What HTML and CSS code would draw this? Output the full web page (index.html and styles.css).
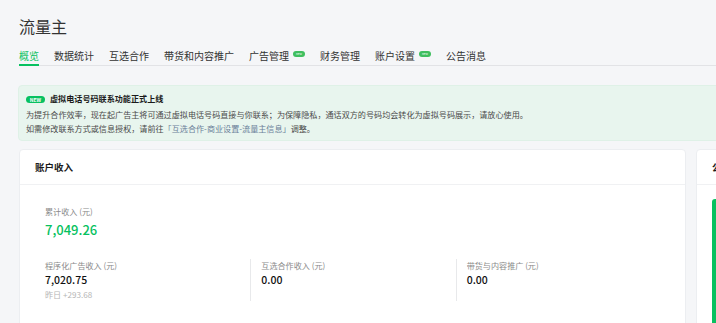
FILE: index.html
```html
<!DOCTYPE html>
<html lang="zh-CN">
<head>
  <meta charset="UTF-8" />
  <title>流量主</title>
  <link rel="stylesheet" href="styles.css">
</head>
<body>
  <div class="page">
    <!-- 标题 -->
    <h1 class="page-title">流量主</h1>

    <!-- 顶部标签 -->
    <nav class="tabs">
      <a class="tab active" href="#">概览</a>
      <a class="tab" href="#">数据统计</a>
      <a class="tab" href="#">互选合作</a>
      <a class="tab" href="#">带货和内容推广</a>
      <a class="tab" href="#">广告管理<span class="tab-new">new</span></a>
      <a class="tab" href="#">财务管理</a>
      <a class="tab" href="#">账户设置<span class="tab-new">new</span></a>
      <a class="tab" href="#">公告消息</a>
    </nav>

    <!-- 通知横幅 -->
    <div class="notice">
      <div class="notice-title">
        <span class="notice-badge">NEW</span>
        虚拟电话号码联系功能正式上线
      </div>
      <p>为提升合作效率，现在起广告主将可通过虚拟电话号码直接与你联系；为保障隐私，通话双方的号码均会转化为虚拟号码展示，请放心使用。</p>
      <p>如需修改联系方式或信息授权，请前往<a href="#">「互选合作-商业设置-流量主信息」</a>调整。</p>
    </div>

    <div class="cards">
      <!-- 账户收入 -->
      <section class="card card-income">
        <div class="card-head">账户收入</div>
        <div class="card-body">
          <div class="label">累计收入 (元)</div>
          <div class="total">7,049.26</div>
          <div class="income-cols">
            <div class="income-col">
              <div class="label">程序化广告收入 (元)</div>
              <div class="value">7,020.75</div>
              <div class="sub">昨日 +293.68</div>
            </div>
            <div class="income-col">
              <div class="label">互选合作收入 (元)</div>
              <div class="value">0.00</div>
            </div>
            <div class="income-col">
              <div class="label">带货与内容推广 (元)</div>
              <div class="value">0.00</div>
            </div>
          </div>
        </div>
      </section>

      <!-- 公告 -->
      <section class="card card-notice">
        <div class="card-head">公告</div>
        <div class="card-body">
          <div class="notice-banner"></div>
        </div>
      </section>
    </div>
  </div>
</body>
</html>
```

FILE: styles.css
```css
html, body {
  margin: 0;
  padding: 0;
  background-color: #f5f6f8;
  overflow: hidden;
}

body {
  font-family: "Noto Sans CJK SC", "Noto Sans", sans-serif;
  color: #1f1f1f;
}

.page {
  width: 1100px;
  padding: 15px 0 0 19px;
}

.page-title {
  margin: 0;
  font-size: 16px;
  line-height: 22px;
  font-weight: 400;
  color: #333;
}

.tabs {
  display: flex;
  gap: 15px;
  margin-top: 12px;
  border-bottom: 1px solid #e2e3e6;
}

.tab {
  display: flex;
  align-items: center;
  font-size: 10px;
  line-height: 14px;
  color: #333;
  text-decoration: none;
  padding-bottom: 1px;
  border-bottom: 2px solid transparent;
  margin-bottom: -1px;
}

.tab.active {
  color: #07c160;
  border-bottom-color: #07c160;
}

.tab-new {
  display: inline-block;
  margin-left: 4px;
  margin-top: -4px;
  width: 12px;
  height: 6px;
  border-radius: 3px;
  background: #3fbf5f;
  color: #fff;
  font-size: 3px;
  line-height: 6px;
  text-align: center;
}

.notice {
  margin-top: 19px;
  margin-left: -1px;
  background: #e8f5ee;
  border: 1px solid #dff1e7;
  border-radius: 4px;
  padding: 7px 0 4px 7px;
}

.notice-title {
  display: flex;
  align-items: center;
  gap: 5px;
  font-size: 8.1px;
  line-height: 12px;
  font-weight: 700;
  color: #1a1a1a;
}

.notice-badge {
  display: inline-block;
  width: 19px;
  height: 7px;
  border-radius: 4px;
  background: #07c160;
  color: #fff;
  font-size: 5px;
  line-height: 7px;
  font-weight: 700;
  text-align: center;
}

.notice p {
  margin: 0;
  font-size: 8.1px;
  line-height: 14px;
  color: #4a4a4a;
}

.notice p:first-of-type {
  margin-top: 3px;
}

.notice a {
  color: #6b7f99;
  text-decoration: none;
}

.cards {
  display: flex;
  gap: 10px;
  margin-top: 8px;
}

.card {
  background: #fff;
  border: 1px solid #eceef1;
  border-radius: 4px;
  flex-shrink: 0;
}

.card-income {
  width: 665px;
}

.card-notice {
  width: 300px;
}

.card-head {
  height: 34px;
  line-height: 34px;
  padding-left: 15px;
  font-size: 9.5px;
  font-weight: 700;
  color: #1a1a1a;
  border-bottom: 1px solid #f0f1f3;
}

.card-income .card-body {
  padding: 21px 24px 20px 25px;
}

.label {
  font-size: 8.1px;
  line-height: 12px;
  color: #8a8a8a;
}

.total {
  margin-top: 3px;
  font-size: 13px;
  line-height: 18px;
  font-weight: 500;
  color: #07c160;
}

.income-cols {
  display: grid;
  grid-template-columns: repeat(3, 1fr);
  margin-top: 20px;
}

.income-col {
  padding-top: 1px;
  height: 41px;
}

.income-col + .income-col {
  border-left: 1px solid #e8e9eb;
  padding-left: 10px;
}

.value {
  margin-top: 1px;
  font-size: 10.5px;
  line-height: 14px;
  font-weight: 500;
  color: #111;
}

.sub {
  margin-top: 2px;
  font-size: 8.1px;
  line-height: 12px;
  color: #b5b5b5;
}

.card-notice .card-body {
  padding: 14px 0 0 15px;
}

.notice-banner {
  height: 200px;
  background: #07c160;
  border-radius: 3px 0 0 0;
}
```
